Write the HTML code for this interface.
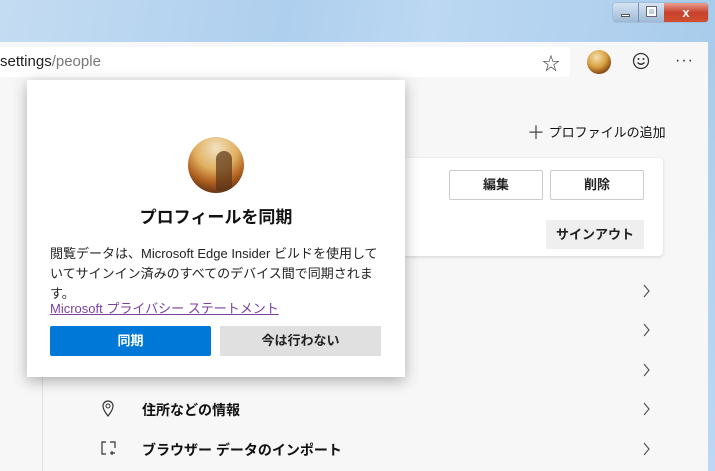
<!DOCTYPE html>
<html><head><meta charset="utf-8"><style>
*{margin:0;padding:0;box-sizing:border-box}
body{width:715px;height:471px;overflow:hidden;position:relative;background:#f7f7f7;font-family:"Liberation Sans","Noto Sans CJK JP",sans-serif;color:#111}
.abs{position:absolute}
.frame{left:0;top:0;width:715px;height:42px;background:linear-gradient(100deg,#c4dcf2 0%,#aecfee 40%,#bcd8f2 60%,#a9ccec 100%)}
.toolbar{left:0;top:42px;width:715px;height:38px;background:#f7f7f7}
.addr{left:0;top:47px;width:570px;height:30px;background:#fff;border-radius:0 4px 4px 0;font-size:15px;line-height:30px;color:#777}
.addr b{font-weight:normal;color:#222}
.rstrip{left:708px;top:42px;width:7px;height:429px;background:linear-gradient(#a9ccec,#bcd8f2)}
.vline{left:42px;top:80px;width:1px;height:391px;background:#e0e0e0}
.card{left:380px;top:158px;width:283px;height:98px;background:#fff;border-radius:4px;box-shadow:0 1px 3px rgba(0,0,0,.15)}
.btn{font-size:13px;font-weight:bold;text-align:center;color:#222}
.ob{background:#fff;border:1px solid #ccc;height:30px;line-height:28px;border-radius:2px}
.pop{left:27px;top:80px;width:378px;height:297px;background:#fff;box-shadow:0 4px 14px rgba(0,0,0,.3)}
.row{font-size:14px;font-weight:bold}
.chev{left:641px}
</style></head><body>
<div class="abs frame"></div>
<div class="abs" style="left:613px;top:3px;width:95px;height:19px;border-radius:3px;overflow:hidden;display:flex;box-shadow:0 0 1px #666">
<div style="width:26px;background:linear-gradient(#d6e4f2,#9fb9d6);border-right:1px solid #7890b0;position:relative"><div class="abs" style="left:8px;top:11px;width:9px;height:3px;background:#fff;border:1px solid #555"></div></div>
<div style="width:25px;background:linear-gradient(#d6e4f2,#9fb9d6);position:relative"><div class="abs" style="left:8px;top:4px;width:9px;height:9px;border:2px solid #fff;outline:1px solid #667"></div></div>
<div style="width:44px;background:linear-gradient(#e8a090,#c8402c 50%,#d05030);color:#fff;font-weight:bold;text-align:center;font-size:13px;line-height:19px">x</div></div>
<div class="abs toolbar"></div>
<div class="abs addr"><b>settings</b>/people</div>
<div class="abs" style="left:542px;top:50px;font-size:18px;color:#444">☆</div>
<div class="abs" style="left:587px;top:50px;width:24px;height:24px;border-radius:50%;background:radial-gradient(circle at 40% 30%,#f4e0b0,#d8a040 45%,#7a3a10 80%)"></div>
<svg class="abs" style="left:632px;top:52px" width="18" height="18" viewBox="0 0 18 18"><circle cx="9" cy="9" r="7.5" fill="none" stroke="#333" stroke-width="1.3"/><circle cx="6.5" cy="7" r="1" fill="#333"/><circle cx="11.5" cy="7" r="1" fill="#333"/><path d="M5.5 10.5q3.5 3.5 7 0" fill="none" stroke="#333" stroke-width="1.3"/></svg>
<div class="abs" style="left:675px;top:52px;font-size:16px;color:#333;letter-spacing:1px">···</div>
<div class="abs rstrip"></div>
<div class="abs vline"></div>
<div class="abs" style="left:527px;top:119px;font-size:13px"><span style="font-size:18px;color:#444;vertical-align:-2px">＋</span> プロファイルの追加</div>
<div class="abs card"></div>
<div class="abs btn ob" style="left:449px;top:170px;width:94px">編集</div>
<div class="abs btn ob" style="left:550px;top:170px;width:94px">削除</div>
<div class="abs btn" style="left:546px;top:220px;width:98px;height:29px;line-height:29px;background:#efefef">サインアウト</div>
<svg class="abs chev" style="top:283px" width="10" height="16" viewBox="0 0 10 16"><path d="M3 2l5 6-5 6" fill="none" stroke="#555" stroke-width="1.2"/></svg>
<svg class="abs chev" style="top:322px" width="10" height="16" viewBox="0 0 10 16"><path d="M3 2l5 6-5 6" fill="none" stroke="#555" stroke-width="1.2"/></svg>
<svg class="abs chev" style="top:362px" width="10" height="16" viewBox="0 0 10 16"><path d="M3 2l5 6-5 6" fill="none" stroke="#555" stroke-width="1.2"/></svg>
<svg class="abs chev" style="top:401px" width="10" height="16" viewBox="0 0 10 16"><path d="M3 2l5 6-5 6" fill="none" stroke="#555" stroke-width="1.2"/></svg>
<svg class="abs chev" style="top:441px" width="10" height="16" viewBox="0 0 10 16"><path d="M3 2l5 6-5 6" fill="none" stroke="#555" stroke-width="1.2"/></svg>
<svg class="abs" style="left:101px;top:400px" width="14" height="18" viewBox="0 0 14 18"><path d="M7 16C3 11 2 8 2 6a5 5 0 0 1 10 0c0 2-1 5-5 10z" fill="none" stroke="#333" stroke-width="1.2"/><circle cx="7" cy="6" r="2" fill="none" stroke="#333"/></svg>
<div class="abs row" style="left:142px;top:400px">住所などの情報</div>
<svg class="abs" style="left:100px;top:440px" width="18" height="16" viewBox="0 0 18 16"><path d="M6 2H2v12h4M10 2h5v6M12 11v4M10 13h5" fill="none" stroke="#333" stroke-width="1.2"/></svg>
<div class="abs row" style="left:142px;top:440px">ブラウザー データのインポート</div>
<div class="abs pop"></div>
<div class="abs" style="left:188px;top:137px;width:56px;height:56px;border-radius:50%;overflow:hidden;background:radial-gradient(circle at 50% 20%,#f2e2c0,#e0b060 40%,#b06020 65%,#402010 95%)"><div class="abs" style="left:28px;top:14px;width:16px;height:40px;border-radius:8px 8px 2px 2px;background:#5a3418;opacity:.7"></div></div>
<div class="abs" style="left:27px;top:203px;width:378px;text-align:center;font-size:17px;font-weight:bold">プロフィールを同期</div>
<div class="abs" style="left:50px;top:244px;width:340px;font-size:13px;line-height:20px;color:#222">閲覧データは、Microsoft Edge Insider ビルドを使用していてサインイン済みのすべてのデバイス間で同期されます。</div>
<div class="abs" style="left:50px;top:298px;font-size:13px;color:#7b3fa0;text-decoration:underline">Microsoft プライバシー ステートメント</div>
<div class="abs btn" style="left:50px;top:326px;width:161px;height:30px;line-height:30px;background:#0078d7;color:#fff;border-radius:2px">同期</div>
<div class="abs btn" style="left:220px;top:326px;width:161px;height:30px;line-height:30px;background:#e0e0e0">今は行わない</div>
</body></html>
